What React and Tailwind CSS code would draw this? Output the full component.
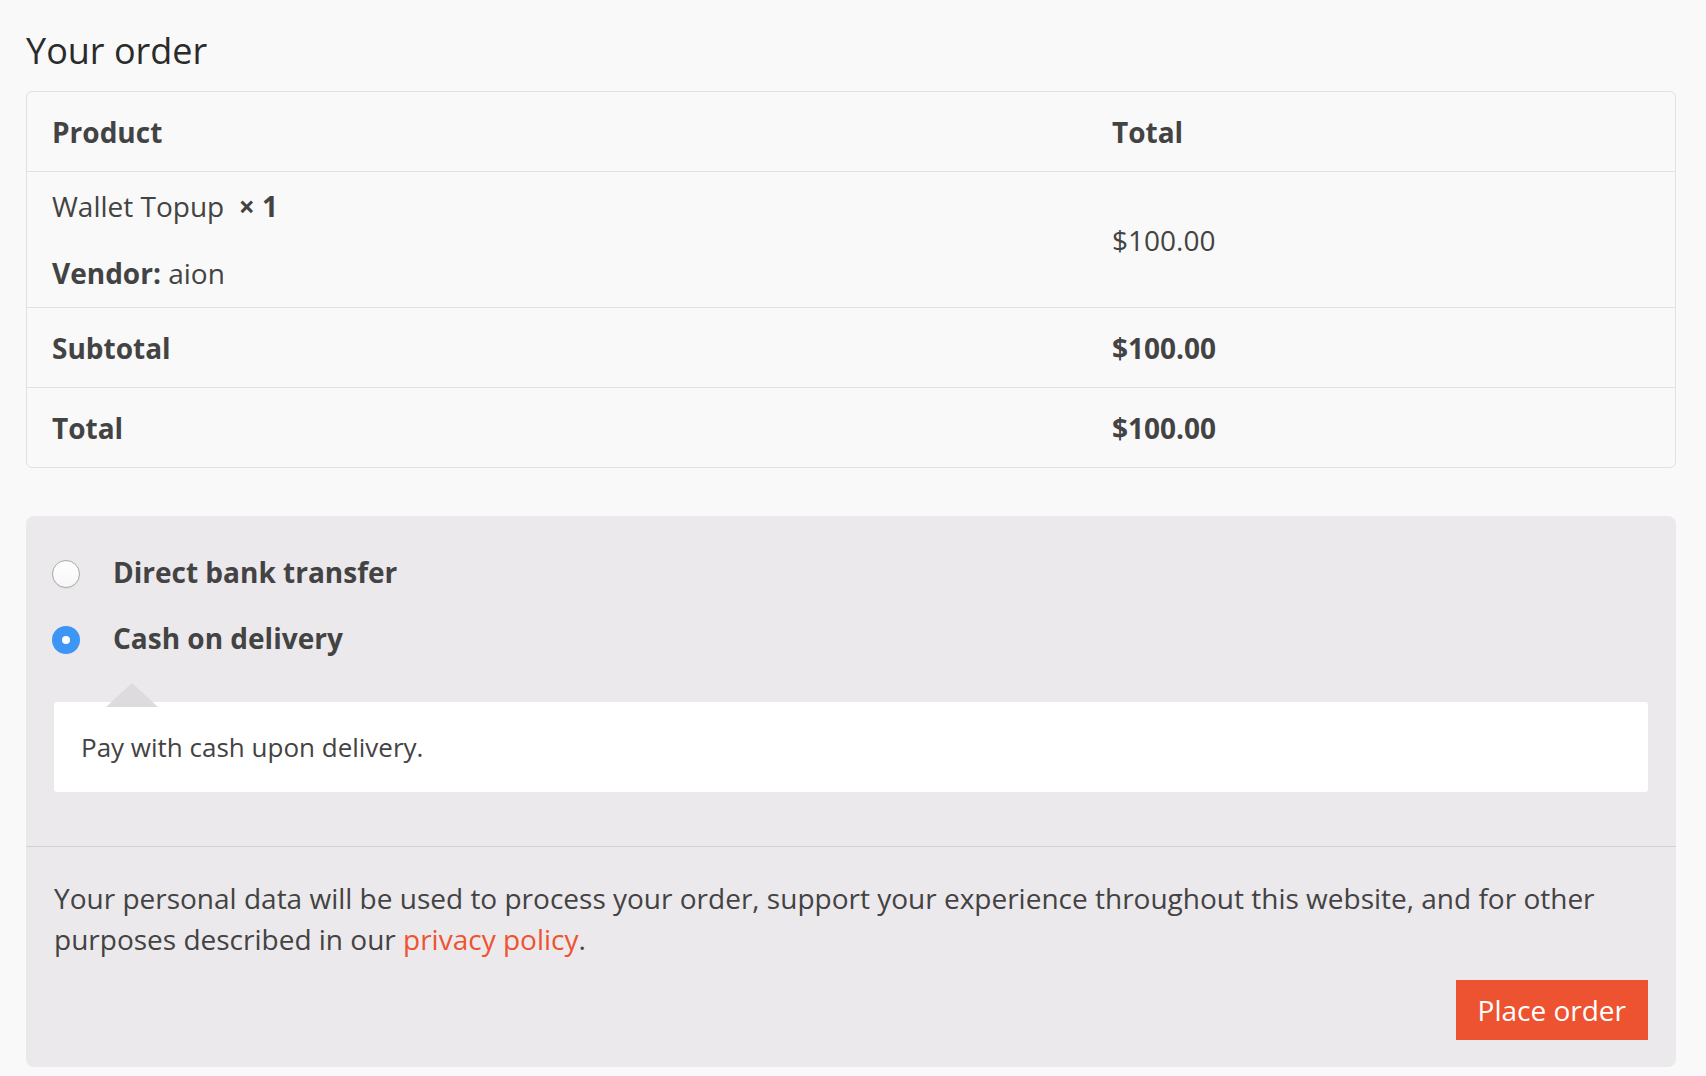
import React from "react";

function Radio({ checked }) {
  if (checked) {
    return (
      <span className="mt-[8px] flex h-[28px] w-[28px] shrink-0 items-center justify-center rounded-full bg-[#3d95f5]">
        <span className="h-[8px] w-[8px] rounded-full bg-white" />
      </span>
    );
  }
  return (
    <span className="mt-[8px] block h-[28px] w-[28px] shrink-0 rounded-full border border-[#a9a9a9] bg-gradient-to-b from-white to-[#f6f6f6] shadow-[0_1px_1px_rgba(0,0,0,0.06)]" />
  );
}

export default function App() {
  return (
    <div
      className="min-h-screen bg-[#f9f9f9] pl-[26px] pr-[30px] pt-[29px] text-[#434343]"
      style={{ fontFamily: '"Open Sans", "Noto Sans", sans-serif' }}
    >
      <h3 className="text-[36px] font-normal leading-[43px] text-[#2b2b2b]">Your order</h3>

      <div className="mt-[19px] rounded-[6px] border border-[#e1e1e1] text-[28px] leading-[40px]">
        <div className="grid h-[80px] grid-cols-[1061px_1fr] items-center border-b border-[#e1e1e1] font-bold">
          <div className="pl-[25px]">Product</div>
          <div className="pl-[24px]">Total</div>
        </div>
        <div className="grid h-[136px] grid-cols-[1061px_1fr] items-center border-b border-[#e1e1e1]">
          <div className="pl-[25px]">
            <div>
              Wallet Topup&nbsp; <strong className="font-bold">× 1</strong>
            </div>
            <div className="mt-[27px]">
              <strong className="font-bold">Vendor:</strong> aion
            </div>
          </div>
          <div className="pl-[24px]">$100.00</div>
        </div>
        <div className="grid h-[80px] grid-cols-[1061px_1fr] items-center border-b border-[#e1e1e1] font-bold">
          <div className="pl-[25px]">Subtotal</div>
          <div className="pl-[24px]">$100.00</div>
        </div>
        <div className="grid h-[79px] grid-cols-[1061px_1fr] items-center font-bold">
          <div className="pl-[25px]">Total</div>
          <div className="pl-[24px]">$100.00</div>
        </div>
      </div>

      <div className="mt-[48px] rounded-[8px] bg-[#ebe9eb]">
        <div className="px-[28px] pb-[54px] pt-[36px]">
          <div className="-ml-[2px] flex flex-col gap-[26px]">
            <label className="flex items-start gap-[33px] text-[28px] font-bold leading-[40px]">
              <Radio checked={false} />
              <span>Direct bank transfer</span>
            </label>
            <label className="flex items-start gap-[33px] text-[28px] font-bold leading-[40px]">
              <Radio checked={true} />
              <span>Cash on delivery</span>
            </label>
          </div>
          <div className="relative mt-[44px] flex h-[90px] items-center rounded-[3px] bg-white pl-[27px] text-[26px] leading-[40px]">
            <span className="absolute left-[52px] top-[-19px] h-0 w-0 border-x-[26px] border-b-[24px] border-x-transparent border-b-[#dddbdd]" />
            <p>Pay with cash upon delivery.</p>
          </div>
        </div>
        <div className="border-t border-[#d3d1d4] px-[28px] pb-[27px] pt-[31px]">
          <p className="text-[28px] leading-[41px]">
            Your personal data will be used to process your order, support your experience throughout this website, and for other purposes described in our{" "}
            <a className="text-[#ee5331]">privacy policy</a>.
          </p>
          <div className="mt-[20px] flex justify-end">
            <button className="h-[60px] bg-[#ee5331] px-[22px] text-[28px] font-normal leading-[40px] text-white">
              Place order
            </button>
          </div>
        </div>
      </div>
    </div>
  );
}
